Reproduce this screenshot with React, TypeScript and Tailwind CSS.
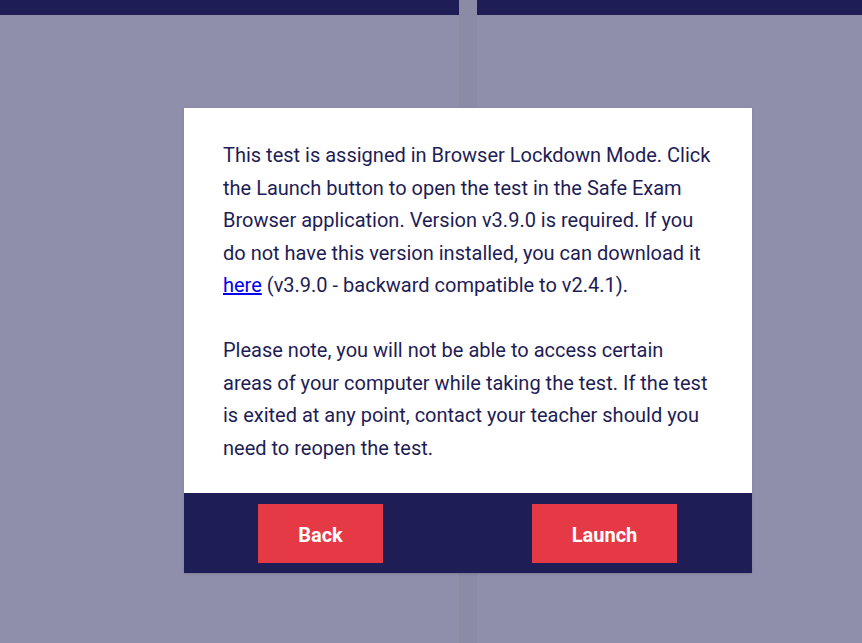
export default function App() {
  return (
    <div
      className="relative w-[862px] h-[643px] overflow-hidden bg-[#8f8fab]"
      style={{ fontFamily: "Roboto, 'Liberation Sans', sans-serif" }}
    >
      {/* page behind the overlay */}
      <div className="flex h-full">
        <div className="w-[459px] flex flex-col">
          <div className="h-[15px] bg-[#1e1d55]" />
        </div>
        <div className="w-[18px] bg-[#8b8ba6]" />
        <div className="flex-1 flex flex-col">
          <div className="h-[15px] bg-[#1e1d55]" />
        </div>
      </div>

      {/* dialog */}
      <div className="absolute left-[184px] top-[108px] w-[568px] shadow-sm">
        <div className="bg-white pl-[39px] pr-[37px] pt-[31px] pb-[29px] text-[20px] leading-[32.5px] text-[#1e1d55]">
          <p>
            This test is assigned in Browser Lockdown Mode. Click the Launch button to open the test in the Safe
            Exam Browser application. Version v3.9.0 is required. If you do not have this version installed, you
            can download it{" "}
            <a href="#" className="text-[#0000ee] underline">
              here
            </a>{" "}
            (v3.9.0 - backward compatible to v2.4.1).
          </p>
          <p className="mt-[32.5px]">
            Please note, you will not be able to access certain areas of your computer while taking the test. If
            the test is exited at any point, contact your teacher should you need to reopen the test.
          </p>
        </div>
        <div className="h-[80px] bg-[#1e1d55] flex items-center justify-between pl-[74px] pr-[75px]">
          <button className="w-[125px] h-[59px] pt-[3px] bg-[#e63946] text-white text-[20px] font-bold">Back</button>
          <button className="w-[145px] h-[59px] pt-[3px] bg-[#e63946] text-white text-[20px] font-bold">Launch</button>
        </div>
      </div>
    </div>
  );
}
